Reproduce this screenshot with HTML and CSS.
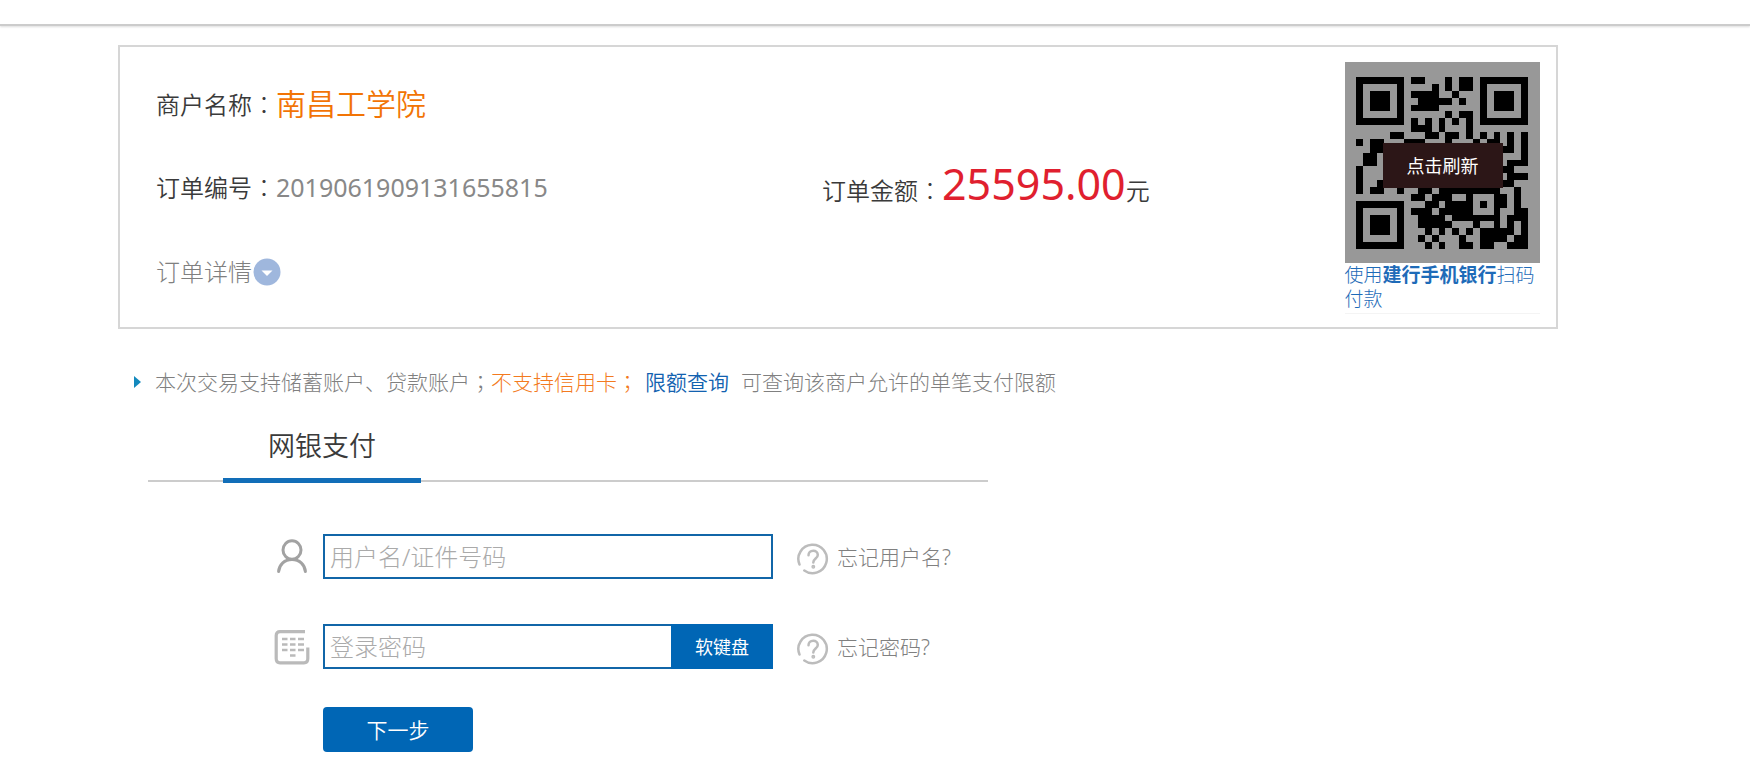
FILE: index.html
```html
<!DOCTYPE html>
<html lang="zh-CN">
<head>
<meta charset="utf-8">
<meta name="viewport" content="width=device-width, initial-scale=1">
<title>网银支付</title>
<link rel="stylesheet" href="styles.css">
</head>
<body>
<header class="topbar"></header>
<main class="page">
  <section class="order">
    <div class="order-info">
      <p class="row"><span class="label">商户名称<span class="mark" lang="zh-TW">：</span></span><span class="merchant">南昌工学院</span></p>
      <div class="row split">
        <p><span class="label">订单编号<span class="mark" lang="zh-TW">：</span></span><span class="number">2019061909131655815</span></p>
        <p class="total"><span class="label">订单金额<span class="mark" lang="zh-TW">：</span></span><span class="amount">25595.00</span><span class="label">元</span></p>
      </div>
      <div class="row">
        <button class="details" type="button">订单详情
          <svg width="28" height="28" viewBox="0 0 28 28" aria-hidden="true"><circle cx="14" cy="14" r="13.5" fill="#9fb7dd"/><path d="M8.5 12.500h11L14 18z" fill="#fff"/></svg>
        </button>
      </div>
    </div>
    <aside class="scan">
      <div class="qr">
        <svg class="qr-code" id="qr" viewBox="0 0 25 25" shape-rendering="crispEdges" aria-hidden="true"></svg>
        <button class="refresh" type="button">点击刷新</button>
      </div>
      <p class="scan-text">使用<b>建行手机银行</b>扫码付款</p>
    </aside>
  </section>

  <p class="notice">
    <svg width="7" height="12" viewBox="0 0 7 12" aria-hidden="true"><path d="M0 0v12l7-6z" fill="#1389bd"/></svg>
    <span>本次交易支持储蓄账户、贷款账户<span class="mark" lang="zh-TW">；</span><span class="warn">不支持信用卡<span class="mark" lang="zh-TW">；</span></span></span>
    <a class="limit" href="#limit">限额查询</a>
    <span>可查询该商户允许的单笔支付限额</span>
  </p>

  <nav class="tabs"><a class="tab" href="#bank">网银支付</a></nav>

  <form class="login">
    <div class="field">
      <label class="field-icon" for="user" aria-label="用户名">
        <svg width="36" height="36" viewBox="0 0 36 36" fill="none" stroke="#a2a2a2" stroke-width="3" stroke-linecap="round"><ellipse cx="18" cy="11" rx="9" ry="9.3"/><path d="M4.600 32.500C5.300 25.500 10.500 20.500 18 20.500s12.700 5 13.400 12"/></svg>
      </label>
      <div class="box"><input class="text" id="user" type="text" placeholder="用户名/证件号码"></div>
      <a class="help" href="#forgot-user">
        <svg width="32" height="32" viewBox="0 0 32 32" fill="none" stroke="#bcbcbc" stroke-width="2.500" stroke-linecap="round" aria-hidden="true"><path d="M2.500 21.500A14.200 14.200 0 1 1 7.300 27.500"/><path d="M11.500 12.300c0-3 2-4.600 4.700-4.600s4.600 1.700 4.600 4.200c0 3.400-4.500 3.800-4.500 7.500"/><circle cx="16.300" cy="23.700" r=".7" fill="#bcbcbc"/></svg>
        <span>忘记用户名?</span>
      </a>
    </div>
    <div class="field">
      <label class="field-icon" for="pass" aria-label="登录密码">
        <svg width="36" height="36" viewBox="0 0 36 36" fill="none" stroke="#bababa"><path d="M31 2.700H6Q2.200 2.700 2.200 6.500V29.500Q2.200 33.800 6 33.800H30Q33.800 33.800 33.800 29.500V18.500" stroke-width="3.200"/><path d="M8 10h5.500m2.500 0h5.500m2.500 0H30M8 15.500h5.500m2.500 0h5.500m2.500 0H30M8 21h5.500m2.500 0h5.500m2.500 0H30M16 26.500h5.500" stroke-width="2.500"/></svg>
      </label>
      <div class="box"><input class="text" id="pass" type="password" placeholder="登录密码"><button class="keypad" type="button">软键盘</button></div>
      <a class="help" href="#forgot-pass">
        <svg width="32" height="32" viewBox="0 0 32 32" fill="none" stroke="#bcbcbc" stroke-width="2.500" stroke-linecap="round" aria-hidden="true"><path d="M2.500 21.500A14.200 14.200 0 1 1 7.300 27.500"/><path d="M11.500 12.300c0-3 2-4.600 4.700-4.600s4.600 1.700 4.600 4.200c0 3.400-4.500 3.800-4.500 7.500"/><circle cx="16.300" cy="23.700" r=".7" fill="#bcbcbc"/></svg>
        <span>忘记密码?</span>
      </a>
    </div>
    <button class="next" type="submit">下一步</button>
  </form>
</main>
<script src="qr.js"></script>
</body>
</html>
```

FILE: styles.css
```css
* {
  box-sizing: border-box;
}

body {
  margin: 0;
  background: #fff;
  color: #808080;
  font-family: "Noto Sans", "Noto Sans CJK SC", sans-serif;
  font-size: 21px;
  font-weight: 300;
  line-height: 30px;
}

p {
  margin: 0;
}

a {
  color: inherit;
  text-decoration: none;
}

b {
  font-weight: 700;
}

button {
  border: 0;
  padding: 0;
  font: inherit;
  cursor: pointer;
}

svg {
  display: block;
  flex: none;
}

.mark {
  font-family: "Noto Sans CJK TC", sans-serif;
  font-weight: 300;
}

.topbar {
  height: 26px;
  border-bottom: 2px solid #ccc;
  box-shadow: 0 1px 2px #ddd;
}

.page {
  margin: 19px 11% 0 118px;
}

.order {
  display: flex;
  justify-content: space-between;
  gap: 24px;
  padding: 15px 16px 13px 36px;
  border: 2px solid #d6d6d6;
}

.order-info {
  flex: 1;
  display: flex;
  flex-direction: column;
}

.row {
  display: flex;
  align-items: center;
  height: 84px;
}

.split {
  display: grid;
  grid-template-columns: 666px 1fr;
}

.label {
  color: #3a3a3a;
  font-size: 24px;
  font-weight: 350;
}

.merchant {
  color: #f27405;
  font-size: 30px;
  font-weight: 350;
}

.number {
  font-size: 25px;
  font-weight: 400;
  color: #888;
}

.amount {
  color: #e01f2f;
  font-size: 43px;
  font-weight: 400;
}

.details {
  display: flex;
  align-items: center;
  gap: 1px;
  background: none;
  color: #808080;
  font-size: 24px;
}

.scan {
  width: 195px;
  border-bottom: 1px solid #f4f4f4;
}

.qr {
  position: relative;
  padding: 15px 12px 14px 11px;
  background: #989898;
}

.qr-code {
  width: 172px;
  height: 172px;
}

.refresh {
  position: absolute;
  top: 81px;
  left: 38px;
  width: 120px;
  height: 45px;
  background: #2c1617;
  color: #fff;
  font-size: 18px;
  font-weight: 400;
}

.scan-text {
  color: #1e6bb8;
  font-size: 19px;
  line-height: 24px;
}

.notice {
  display: flex;
  align-items: center;
  margin: 37px 0 0 16px;
}

.notice svg {
  margin-right: 14px;
}

.warn {
  color: #f37a20;
}

.limit {
  margin: 0 12px 0 7px;
  color: #1262b0;
  font-weight: 350;
}

.tabs {
  display: flex;
  width: 840px;
  margin: 26px 0 0 30px;
  padding-left: 75px;
  border-bottom: 2px solid #ccc;
}

.tab {
  width: 198px;
  height: 60px;
  margin-bottom: -3px;
  border-bottom: 5px solid #126eb8;
  color: #3a3a3a;
  font-size: 27px;
  font-weight: 350;
  line-height: 45px;
  text-align: center;
}

.login {
  display: flex;
  flex-direction: column;
  align-items: flex-start;
  margin: 52px 0 0 156px;
}

.field {
  display: flex;
  align-items: center;
  margin-bottom: 45px;
}

.field-icon {
  margin-right: 13px;
}

.box {
  display: flex;
  width: 450px;
  height: 45px;
  margin-right: 24px;
  border: 2px solid #1166a8;
}

.text {
  flex: 1;
  min-width: 0;
  border: 0;
  padding: 0 5px;
  outline: 0;
  background: #fff;
  color: #333;
  font: inherit;
  font-size: 24px;
}

.text::placeholder {
  color: #aaa;
}

.keypad {
  width: 102px;
  margin: -2px;
  background: #0066b5;
  color: #fff;
  font-size: 18px;
  font-weight: 400;
}

.help {
  display: flex;
  align-items: center;
  gap: 8px;
}

.help svg {
  margin-top: 4px;
}

.next {
  width: 150px;
  height: 45px;
  margin: -7px 0 0 49px;
  border-radius: 4px;
  background: #0066b5;
  color: #fff;
  font-weight: 350;
}
```

FILE: qr.js
```js
const rows = [
  "#######.##...#.##.#######",
  "#.....#....#.#.##.#.....#",
  "#.###.#.####..#...#.###.#",
  "#.###.#..#####.#..#.###.#",
  "#.###.#.####......#.###.#",
  "#.....#......#.##.#.....#",
  "#######.#.#.#.#.#.#######",
  "........###.#...#........",
  ".....##...##.##.#.#.#.#.#",
  "#.##...###...#...#.##.#.#",
  "..##.....#..#...#.#..##.#",
  ".##....#...#..#..#.#....#",
  ".##...#..#..#..#..#...###",
  "#...#...#..#..#...#..##..",
  "#....#.#..#..#..#...#.###",
  "#..#....#..#...#..#..##..",
  "#.##..#..##.#########..#.",
  "........##.###..#...##.#.",
  "#######...##.####.#.##.#.",
  "#.....#.###.#####...#..##",
  "#.###.#..####.#######.###",
  "#.###.#..#####...#..#.#.#",
  "#.###.#...#.#.#.#.#####.#",
  "#.....#..#.#...#..####.##",
  "#######...#.#..##.##..###"
];
const d = rows.map((row, y) =>
  [...row].map((cell, x) => (cell === "#" ? `M${x} ${y}h1v1h-1z` : "")).join("")
).join("");
document.getElementById("qr").innerHTML = `<path d="${d}"/>`;
```
